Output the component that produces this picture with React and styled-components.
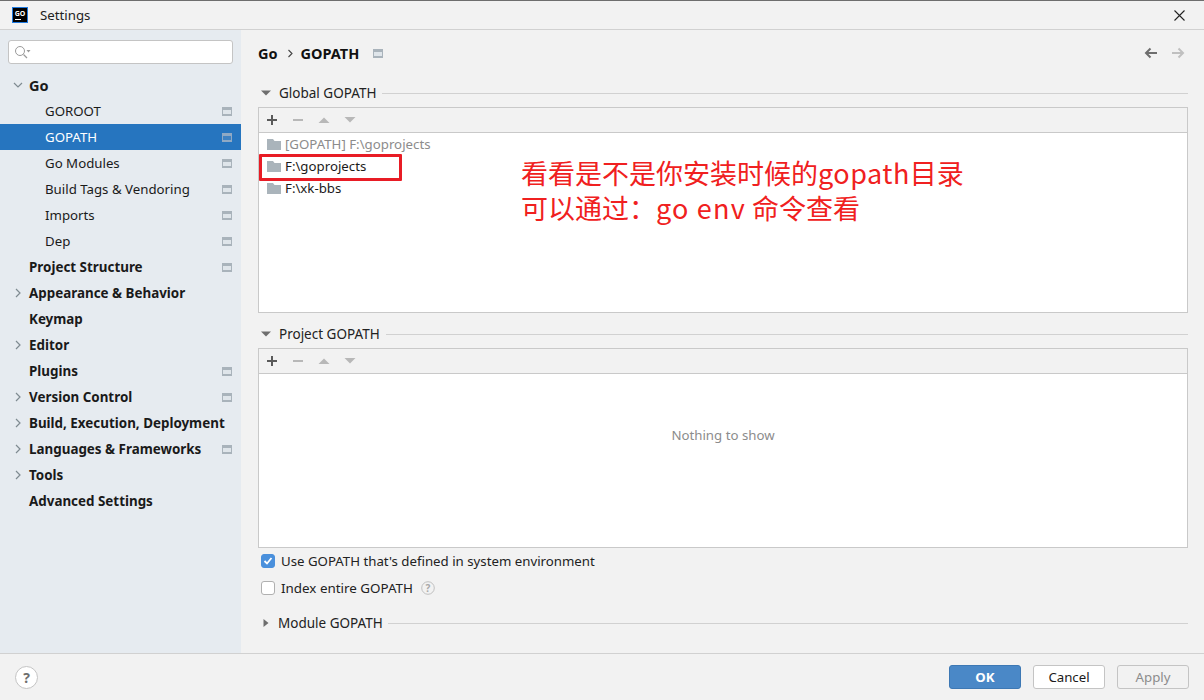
import React from "react";
import styled, { createGlobalStyle } from "styled-components";

const Global = createGlobalStyle`
  html, body { margin: 0; padding: 0; }
  body { font-family: "Noto Sans", "Noto Sans CJK SC", sans-serif; font-size: 13.25px; color: #1a1a1a; background: #f2f2f2; }
  * { box-sizing: border-box; }
`;

const Window = styled.div`
  width: 1204px; height: 700px; display: flex; flex-direction: column; overflow: hidden;
  background: #f2f2f2; border-top: 1px solid #6e6e6e; position: relative;
`;
const TitleBar = styled.div`
  height: 29px; flex: none; display: flex; align-items: center; padding: 0 19px 0 12px; gap: 12px;
  border-bottom: 1px solid #d1d1d1; color: #222;
`;
const TitleText = styled.span`flex: 1;`;
const Body = styled.div`flex: 1; display: flex; min-height: 0;`;
const Sidebar = styled.aside`
  width: 241px; flex: none; background: #e6ebf0; display: flex; flex-direction: column; padding-top: 10px;
`;
const SearchBox = styled.div`
  margin: 0 8px 0 8px; height: 24px; background: #fff; border: 1px solid #c4c4c4; border-radius: 3px;
  display: flex; align-items: center; padding-left: 5px;
`;
const Tree = styled.div`margin-top: 8px; display: flex; flex-direction: column;`;
const Row = styled.div`
  height: 26px; display: flex; align-items: center; padding-left: ${p => p.$indent}px; padding-right: 9px;
  background: ${p => (p.$active ? "#2675bf" : "transparent")};
  color: ${p => (p.$active ? "#fff" : "#1a1a1a")};
  font-weight: ${p => (p.$bold ? 700 : 400)};
  font-size: ${p => p.$size || (p.$bold ? "13.4px" : "13.25px")};
  position: relative;
`;
const RowLabel = styled.span`flex: 1;`;
const Arrow = styled.span`
  position: absolute; left: 13px; top: 8px; width: 10px; height: 10px; display: flex;
`;
const Main = styled.main`
  flex: 1; min-width: 0; display: flex; flex-direction: column; padding: 13px 16px 0 17px; position: relative;
`;
const Crumbs = styled.div`
  height: 20px; display: flex; align-items: center; font-weight: 700; font-size: 14.5px; color: #111;
`;
const CrumbSep = styled.span`margin: 0 7px 0 9px; display: flex;`;
const CrumbGear = styled.span`margin-left: 14px; display: flex;`;
const NavArrows = styled.span`margin-left: auto; display: flex; gap: 13px; margin-right: 3px;`;
const SectionHead = styled.div`
  height: 20px; display: flex; align-items: center; color: #222; gap: ${p => p.$gap || 7}px;
  margin-top: ${p => p.$top}px; padding-left: 2px; font-size: 13.5px;
`;
const Rule = styled.span`flex: 1; height: 1px; background: #d1d1d1; margin-left: -1px;`;
const Panel = styled.section`
  margin-top: 4px; height: ${p => p.$h}px; flex: none; border: 1px solid #c9c9c9; display: flex; flex-direction: column;
`;
const PanelBar = styled.div`
  height: 25px; flex: none; background: #f2f2f2; border-bottom: 1px solid #c9c9c9; display: flex; align-items: center;
  padding-left: 6px; gap: 12px;
`;
const PanelBody = styled.div`
  flex: 1; background: #fff; display: flex; flex-direction: column;
`;
const PathRow = styled.div`
  height: 22px; display: flex; align-items: center; gap: 4px; padding-left: 8px;
  color: ${p => (p.$muted ? "#8c8c8c" : "#1a1a1a")};
`;
const Empty = styled.div`
  flex: 1; display: flex; align-items: center; justify-content: center; color: #8c8c8c; padding-bottom: 52px;
`;
const CheckRow = styled.label`
  display: flex; align-items: center; gap: 6px; height: 20px; margin-top: ${p => p.$top}px; margin-left: 3px; color: #222;
`;
const Box = styled.span`
  width: 14px; height: 14px; border-radius: 3px; flex: none; display: flex; align-items: center; justify-content: center;
  background: ${p => (p.$on ? "#4a90dc" : "#fff")}; border: 1px solid ${p => (p.$on ? "#4a90dc" : "#b0b0b0")};
`;
const BoxLabel = styled.span`font-size: ${p => p.$size || "inherit"};`;
const Help = styled.span`margin-left: 2px; display: flex;`;
const Footer = styled.footer`
  height: 47px; flex: none; border-top: 1px solid #d1d1d1; display: flex; align-items: center;
  padding: 0 15px 0 15px; gap: 12px; background: #f2f2f2;
`;
const HelpButton = styled.span`
  width: 23px; height: 23px; border-radius: 50%; border: 1px solid #c4c4c4; background: #fff;
  display: flex; align-items: center; justify-content: center; margin-right: auto; font-weight: 700; color: #6e6e6e; font-size: 14px;
`;
const Button = styled.button`
  width: 72px; height: 24px; padding: 0; border-radius: 3px; font: inherit; font-weight: ${p => (p.$primary ? 700 : 400)};
  background: ${p => (p.$primary ? "#4a88c7" : p.$disabled ? "#f2f2f2" : "#fff")};
  color: ${p => (p.$primary ? "#fff" : p.$disabled ? "#8c8c8c" : "#1a1a1a")};
  border: 1px solid ${p => (p.$primary ? "#3d78b4" : "#c4c4c4")};
`;
const Highlight = styled.div`
  position: absolute; left: 259px; top: 153px; width: 143px; height: 27px; border: 3px solid #e81c25; border-radius: 1px; pointer-events: none;
`;
const Note = styled.div`
  position: absolute; left: 521px; top: 154px; color: #f02020; font-size: 27px; line-height: 35px;
  font-family: "Noto Sans CJK SC", "Noto Sans", sans-serif; white-space: nowrap;
`;
const NoteLatin = styled.span`letter-spacing: ${p => p.$spacing}px;`;

const GearIcon = ({ active }) => (
  <svg width="10" height="9" viewBox="0 0 10 9" style={{ display: "block" }}>
    <rect width="10" height="9" fill={active ? "#8fa9c4" : "#a9b3bb"} />
    <rect x="1" y="3" width="8" height="4" fill={active ? "#3f82c2" : "#dfe5ea"} />
  </svg>
);
const Chevron = ({ down }) => (
  <svg width="10" height="10" viewBox="0 0 10 10">
    <path d={down ? "M1 3l4 4 4-4" : "M3 1l4 4-4 4"} fill="none" stroke="#7f8b91" strokeWidth="1.2" />
  </svg>
);
const Folder = () => (
  <svg width="14" height="12" viewBox="0 0 14 12" style={{ flex: "none" }}>
    <path d="M0 1h6l1.5 2H14v9H0z" fill="#aab4bb" />
  </svg>
);
const Plus = () => (
  <svg width="14" height="14" viewBox="0 0 14 14"><path d="M7 2v10M2 7h10" stroke="#5a5a5a" strokeWidth="2" /></svg>
);
const Minus = () => (
  <svg width="14" height="14" viewBox="0 0 14 14"><path d="M2 7h10" stroke="#b8b8b8" strokeWidth="2" /></svg>
);
const Up = () => (
  <svg width="14" height="14" viewBox="0 0 14 14"><path d="M1.5 10L7 4.5 12.5 10z" fill="#b8b8b8" /></svg>
);
const Down = () => (
  <svg width="14" height="14" viewBox="0 0 14 14"><path d="M1.5 4L7 9.5 12.5 4z" fill="#b8b8b8" /></svg>
);
const Tri = ({ right }) => (
  <svg width="12" height="12" viewBox="0 0 12 12" style={{ flex: "none" }}>
    <path d={right ? "M3.5 2l5 4-5 4z" : "M1 3.5h10L6 8.5z"} fill="#6e6e6e" />
  </svg>
);
const ArrowIcon = ({ dir, color }) => (
  <svg width="14" height="14" viewBox="0 0 14 14">
    <path d={dir === "left" ? "M13 7H2M6.5 2.5L2 7l4.5 4.5" : "M1 7h11M7.5 2.5L12 7l-4.5 4.5"} fill="none" stroke={color} strokeWidth="2" />
  </svg>
);

const items = [
  { label: "Go", bold: true, indent: 29, chev: "down", size: "14.5px" },
  { label: "GOROOT", indent: 45, gear: true },
  { label: "GOPATH", indent: 45, gear: true, active: true },
  { label: "Go Modules", indent: 45, gear: true },
  { label: "Build Tags & Vendoring", indent: 45, gear: true },
  { label: "Imports", indent: 45, gear: true },
  { label: "Dep", indent: 45, gear: true },
  { label: "Project Structure", bold: true, indent: 29, gear: true },
  { label: "Appearance & Behavior", bold: true, indent: 29, chev: "right" },
  { label: "Keymap", bold: true, indent: 29 },
  { label: "Editor", bold: true, indent: 29, chev: "right" },
  { label: "Plugins", bold: true, indent: 29, gear: true },
  { label: "Version Control", bold: true, indent: 29, chev: "right", gear: true },
  { label: "Build, Execution, Deployment", bold: true, indent: 29, chev: "right" },
  { label: "Languages & Frameworks", bold: true, indent: 29, chev: "right", gear: true },
  { label: "Tools", bold: true, indent: 29, chev: "right" },
  { label: "Advanced Settings", bold: true, indent: 29 },
];

const Toolbar = () => (
  <PanelBar><Plus /><Minus /><Up /><Down /></PanelBar>
);

export default function App() {
  return (
    <Window>
      <Global />
      <TitleBar>
        <svg width="16" height="16" viewBox="0 0 16 16" style={{ flex: "none" }}>
          <rect x="0.5" y="0.5" width="15" height="15" fill="#000" stroke="#1f7ae0" />
          <text x="8" y="8.5" fontSize="7" fontWeight="700" fill="#fff" fontFamily="Noto Sans" textAnchor="middle">GO</text>
          <rect x="3" y="12" width="6" height="1" fill="#fff" />
        </svg>
        <TitleText>Settings</TitleText>
        <svg width="11" height="11" viewBox="0 0 11 11"><path d="M.5.5l10 10M10.5.5l-10 10" stroke="#222" strokeWidth="1.1" /></svg>
      </TitleBar>
      <Body>
        <Sidebar>
          <SearchBox>
            <svg width="18" height="14" viewBox="0 0 18 14">
              <circle cx="6" cy="6" r="4.5" fill="none" stroke="#9a9a9a" />
              <path d="M9.5 9.5L13 13" stroke="#9a9a9a" strokeWidth="1.2" />
              <path d="M12.5 5h4l-2 2.5z" fill="#9a9a9a" />
            </svg>
          </SearchBox>
          <Tree>
            {items.map(i => (
              <Row key={i.label} $indent={i.indent} $bold={i.bold} $active={i.active} $size={i.size}>
                {i.chev && <Arrow><Chevron down={i.chev === "down"} /></Arrow>}
                <RowLabel>{i.label}</RowLabel>
                {i.gear && <GearIcon active={i.active} />}
              </Row>
            ))}
          </Tree>
        </Sidebar>
        <Main>
          <Crumbs>
            Go
            <CrumbSep><svg width="7" height="9" viewBox="0 0 7 9"><path d="M1.5 1l3.5 3.5L1.5 8" fill="none" stroke="#444" strokeWidth="1.1" /></svg></CrumbSep>
            GOPATH
            <CrumbGear><GearIcon /></CrumbGear>
            <NavArrows>
              <ArrowIcon dir="left" color="#6e6e6e" />
              <ArrowIcon dir="right" color="#c0c0c0" />
            </NavArrows>
          </Crumbs>
          <SectionHead $top={20}><Tri />Global GOPATH<Rule /></SectionHead>
          <Panel $h={206}>
            <Toolbar />
            <PanelBody>
              <PathRow $muted><Folder />[GOPATH] F:\goprojects</PathRow>
              <PathRow><Folder />F:\goprojects</PathRow>
              <PathRow><Folder />F:\xk-bbs</PathRow>
            </PanelBody>
          </Panel>
          <SectionHead $top={11}><Tri />Project GOPATH<Rule /></SectionHead>
          <Panel $h={200}>
            <Toolbar />
            <PanelBody><Empty>Nothing to show</Empty></PanelBody>
          </Panel>
          <CheckRow $top={3}>
            <Box $on><svg width="10" height="10" viewBox="0 0 10 10"><path d="M1.5 5l2.5 2.5L8.5 2" fill="none" stroke="#fff" strokeWidth="1.8" /></svg></Box>
            Use GOPATH that's defined in system environment
          </CheckRow>
          <CheckRow $top={7}>
            <Box />
            <BoxLabel $size="13.4px">Index entire GOPATH</BoxLabel>
            <Help>
              <svg width="14" height="14" viewBox="0 0 14 14">
                <circle cx="7" cy="7" r="6.3" fill="none" stroke="#c0c0c0" />
                <text x="7" y="10.5" textAnchor="middle" fontSize="10" fontWeight="700" fill="#a8a8a8" fontFamily="Noto Sans">?</text>
              </svg>
            </Help>
          </CheckRow>
          <SectionHead $top={15} $gap={6}><Tri right />Module GOPATH<Rule /></SectionHead>
        </Main>
      </Body>
      <Footer>
        <HelpButton>?</HelpButton>
        <Button $primary>OK</Button>
        <Button>Cancel</Button>
        <Button $disabled>Apply</Button>
      </Footer>
      <Highlight />
      <Note>看看是不是你安装时候的<NoteLatin $spacing={0.5}>gopath</NoteLatin>目录<br />可以通过：<NoteLatin $spacing={1.2}>go env</NoteLatin> 命令查看</Note>
    </Window>
  );
}
